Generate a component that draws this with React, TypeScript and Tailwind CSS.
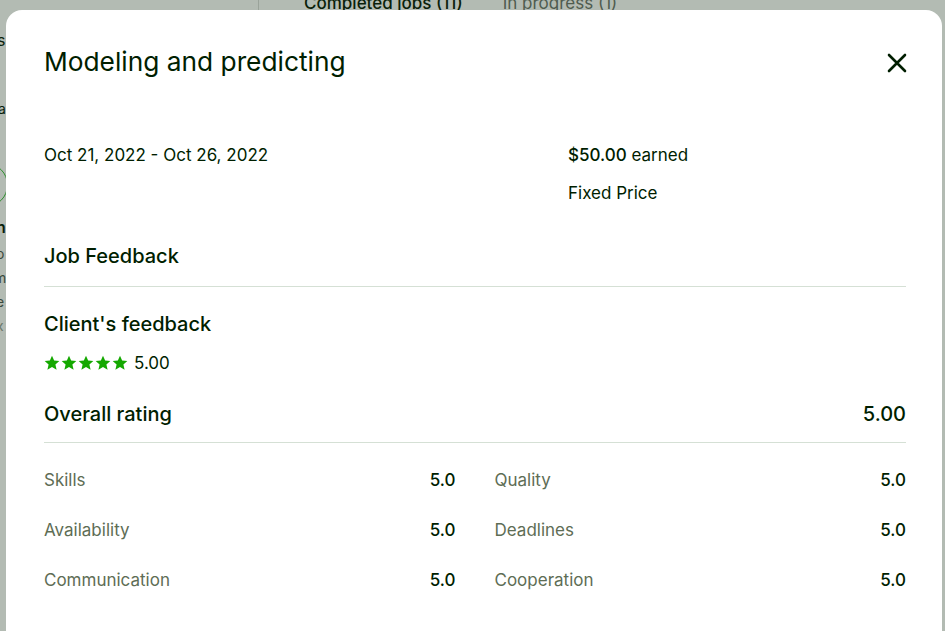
import React from 'react';

const font = { fontFamily: 'Inter, "Liberation Sans", sans-serif' };

function Star() {
  return (
    <svg width="16" height="16" viewBox="0 0 24 24" className="shrink-0">
      <path
        d="M12 1.2l3.2 7.2 7.8.7-5.9 5.2 1.8 7.7L12 18l-6.9 4 1.8-7.7-5.9-5.2 7.8-.7z"
        fill="#14a800"
      />
    </svg>
  );
}

function CloseIcon() {
  return (
    <svg width="20" height="20" viewBox="0 0 20 20">
      <path d="M2 2l16 16M18 2L2 18" stroke="#001e00" strokeWidth="2.6" strokeLinecap="round" />
    </svg>
  );
}

const left = [
  ['Skills', '5.0'],
  ['Availability', '5.0'],
  ['Communication', '5.0'],
];
const right = [
  ['Quality', '5.0'],
  ['Deadlines', '5.0'],
  ['Cooperation', '5.0'],
];

function Row({ label, value }: { label: string; value: string }) {
  return (
    <div className="flex h-[50px] items-center justify-between">
      <span className="text-[17px] text-[#5e6d55]">{label}</span>
      <span className="text-[17px] font-medium text-[#001e00]">{value}</span>
    </div>
  );
}

export default function App() {
  return (
    <div className="relative h-[631px] w-[945px] overflow-hidden bg-[#b3bbb3]" style={font}>
      {/* page behind the backdrop */}
      <div className="flex h-[10px] items-end">
        <div className="h-full w-[259px] border-r border-[#9aa39a]" />
        <div className="-mb-[2px] flex gap-[40px] pl-[45px] text-[17px] leading-none">
          <span className="font-medium text-[#0a1f0a]">Completed jobs (11)</span>
          <span className="text-[#4f5c4f]">In progress (1)</span>
        </div>
      </div>
      <div className="flex w-[6px] flex-col overflow-hidden text-[16px] leading-none text-[#0a1f0a]">
        <span className="mt-[22px] -ml-[3px]">s</span>
        <span className="mt-[54px] -ml-[2px] text-[14px]">a</span>
        <span className="mt-[47px] -ml-[36px] h-[44px] w-[44px] shrink-0 rounded-full border border-[#2f8f2f]" />
        <span className="mt-[12px] -ml-[4px] font-semibold">n</span>
        <span className="mt-[12px] -ml-[4px] text-[14px] text-[#3c4a3c]">o</span>
        <span className="mt-[10px] -ml-[6px] text-[14px] text-[#3c4a3c]">m</span>
        <span className="mt-[10px] -ml-[4px] text-[14px] text-[#3c4a3c]">e</span>
        <span className="mt-[10px] -ml-[4px] text-[14px] text-[#6a776a]">x</span>
      </div>

      {/* modal */}
      <div className="absolute left-[6px] top-[10px] h-[660px] w-[936px] rounded-[16px] bg-white pl-[38px] pr-[36px] pt-[34px]">
        <div className="flex items-center justify-between">
          <h2 className="text-[26.3px] font-normal leading-[36px] text-[#001e00]">Modeling and predicting</h2>
          <button className="mr-[-1px] mt-[2px] flex h-[24px] w-[22px] items-center justify-end">
            <CloseIcon />
          </button>
        </div>

        <div className="mt-[63px] flex text-[17px] text-[#001e00]">
          <div className="w-[524px] leading-[24px]">Oct 21, 2022 - Oct 26, 2022</div>
          <div className="flex flex-col gap-[14px] leading-[24px]">
            <div>
              <span className="font-medium">$50.00</span> earned
            </div>
            <div>Fixed Price</div>
          </div>
        </div>

        <h3 className="mt-[37px] text-[20px] font-medium leading-[28px] text-[#001e00]">Job Feedback</h3>
        <div className="mt-[16px] border-t border-[#d5e0d5]" />

        <h4 className="mt-[23px] text-[20px] font-medium leading-[28px] text-[#001e00]">Client's feedback</h4>
        <div className="mt-[13px] flex items-center gap-[6px]">
          <div className="flex gap-[1px]">
            <Star />
            <Star />
            <Star />
            <Star />
            <Star />
          </div>
          <span className="text-[17px] leading-[24px] text-[#001e00]">5.00</span>
        </div>

        <div className="mt-[25px] flex items-center justify-between text-[20px] font-medium leading-[28px] text-[#001e00]">
          <span>Overall rating</span>
          <span>5.00</span>
        </div>
        <div className="mt-[14px] border-t border-[#d5e0d5]" />

        <div className="mt-[13px] grid grid-cols-2 gap-x-[39px]">
          <div>
            {left.map(([l, v]) => (
              <Row key={l} label={l} value={v} />
            ))}
          </div>
          <div>
            {right.map(([l, v]) => (
              <Row key={l} label={l} value={v} />
            ))}
          </div>
        </div>
      </div>
    </div>
  );
}
